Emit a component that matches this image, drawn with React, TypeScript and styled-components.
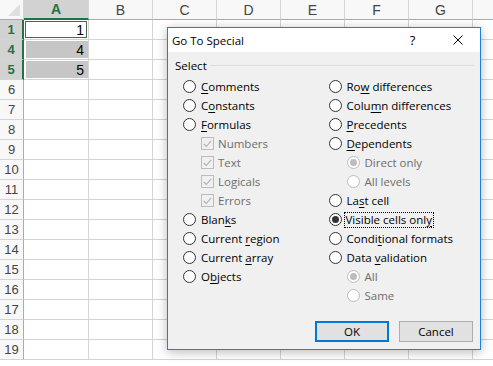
import styled, { createGlobalStyle } from "styled-components";

const GlobalStyle = createGlobalStyle`
  html, body {
    margin: 0;
    padding: 0;
    background: #fff;
    overflow: hidden;
  }
`;

const GREEN = "#217346";
const GRID = "#d4d4d4";

const Sheet = styled.div`
  position: relative;
  width: 493px;
  height: 366px;
  overflow: hidden;
  background: #fff;
  font-family: "Liberation Sans", Arial, sans-serif;
`;

const HeaderRow = styled.div`
  display: flex;
  height: 20px;
  background: #f8f8f8;
`;

const Corner = styled.div`
  position: relative;
  flex: 0 0 24px;
  box-sizing: border-box;
  border-right: 1px solid ${GRID};
  border-bottom: 1px solid #ababab;
  &::after {
    content: "";
    position: absolute;
    right: 3px;
    bottom: 3px;
    border-left: 12px solid transparent;
    border-bottom: 12px solid #dfdfdf;
  }
`;

const ColHead = styled.div<{ $on?: boolean; $w: number }>`
  flex: 0 0 ${p => p.$w}px;
  box-sizing: border-box;
  display: flex;
  align-items: center;
  justify-content: center;
  font-size: 14px;
  color: ${p => (p.$on ? GREEN : "#444")};
  font-weight: ${p => (p.$on ? "bold" : "normal")};
  background: ${p => (p.$on ? "#d2d2d2" : "transparent")};
  border-right: 1px solid ${GRID};
  border-bottom: ${p => (p.$on ? `2px solid ${GREEN}` : "1px solid #ababab")};
`;

const Row = styled.div`
  display: flex;
  height: 20px;
`;

const RowHead = styled.div<{ $on?: boolean }>`
  flex: 0 0 24px;
  box-sizing: border-box;
  display: flex;
  align-items: center;
  justify-content: center;
  font-size: 13px;
  color: ${p => (p.$on ? GREEN : "#444")};
  font-weight: ${p => (p.$on ? "bold" : "normal")};
  background: ${p => (p.$on ? "#d2d2d2" : "#f8f8f8")};
  border-bottom: 1px solid ${GRID};
  border-right: ${p => (p.$on ? `2px solid ${GREEN}` : "1px solid #ababab")};
`;

const Cell = styled.div<{ $w: number; $fill?: boolean; $active?: boolean }>`
  flex: 0 0 ${p => p.$w}px;
  box-sizing: border-box;
  display: flex;
  align-items: center;
  justify-content: flex-end;
  padding-right: 4px;
  font-size: 14px;
  color: #000;
  border-right: 1px solid ${GRID};
  border-bottom: 1px solid ${GRID};
  background: ${p => (p.$fill ? "#c6c6c6" : "#fff")};
  box-shadow: ${p =>
    p.$active
      ? "inset 0 0 0 1px #fff, inset 0 0 0 2px #4a6656"
      : p.$fill
      ? "inset 1px 0 0 1px #fff"
      : "none"};
`;

const Dialog = styled.div`
  position: absolute;
  left: 167px;
  top: 27px;
  width: 314px;
  height: 323px;
  box-sizing: border-box;
  border: 1px solid #1883d7;
  background: #f0f0f0;
  box-shadow: 0 2px 10px rgba(0, 0, 0, 0.28);
  font-family: "Segoe UI", "Open Sans", sans-serif;
  font-size: 11.5px;
  color: #000;
  display: flex;
  flex-direction: column;
`;

const TitleBar = styled.div`
  height: 24px;
  background: #fff;
  display: flex;
  align-items: center;
  padding-left: 4px;
`;

const Title = styled.div`
  flex: 1;
  font-size: 11.5px;
`;

const TitleButton = styled.div`
  width: 45px;
  height: 24px;
  display: flex;
  align-items: center;
  justify-content: center;
  font-size: 13px;
`;

const Body = styled.div`
  flex: 1;
  display: flex;
  flex-direction: column;
  padding: 5px 6px 0 7px;
`;

const GroupHeader = styled.div`
  display: flex;
  align-items: center;
  height: 16px;
  gap: 3px;
`;

const Rule = styled.div`
  flex: 1;
  height: 1px;
  background: #dcdcdc;
`;

const Columns = styled.div`
  display: flex;
  padding-left: 8px;
  margin-top: 4px;
`;

const Column = styled.div`
  width: 150px;
  display: flex;
  flex-direction: column;
`;

const Item = styled.div<{ $indent?: boolean; $disabled?: boolean }>`
  height: 19px;
  display: flex;
  align-items: center;
  padding-left: ${p => (p.$indent ? 18 : 0)}px;
  color: ${p => (p.$disabled ? "#6d6d6d" : "#000")};
  white-space: pre;
  u {
    text-decoration: underline;
    text-underline-offset: 2px;
  }
`;

const Radio = styled.span<{ $checked?: boolean; $disabled?: boolean }>`
  width: 13px;
  height: 13px;
  box-sizing: border-box;
  border-radius: 50%;
  border: 1px solid ${p => (p.$disabled ? "#bcbcbc" : "#333")};
  background: #fff;
  margin-right: 5px;
  display: flex;
  align-items: center;
  justify-content: center;
  flex: 0 0 auto;
  &::after {
    content: "";
    width: 7px;
    height: 7px;
    border-radius: 50%;
    background: ${p => (p.$disabled ? "#bcbcbc" : "#333")};
    display: ${p => (p.$checked ? "block" : "none")};
  }
`;

const Check = styled.span`
  width: 13px;
  height: 13px;
  box-sizing: border-box;
  border: 1px solid #bcbcbc;
  margin-right: 4px;
  display: flex;
  align-items: center;
  justify-content: center;
  flex: 0 0 auto;
`;

const Label = styled.span<{ $focus?: boolean }>`
  outline: ${p => (p.$focus ? "1px dotted #000" : "none")};
  padding: ${p => (p.$focus ? "0 1px" : "0")};
  margin-left: ${p => (p.$focus ? "-2px" : "0")};
  line-height: 14px;
`;

const Buttons = styled.div`
  display: flex;
  justify-content: flex-end;
  gap: 10px;
  margin-top: 16px;
  padding-right: 1px;
`;

const Button = styled.div<{ $default?: boolean }>`
  width: 74px;
  height: 21px;
  box-sizing: border-box;
  background: #e1e1e1;
  border: ${p => (p.$default ? "2px solid #0078d7" : "1px solid #adadad")};
  display: flex;
  align-items: center;
  justify-content: center;
`;

const cols = [
  { name: "A", w: 65 },
  { name: "B", w: 64 },
  { name: "C", w: 64 },
  { name: "D", w: 64 },
  { name: "E", w: 64 },
  { name: "F", w: 64 },
  { name: "G", w: 64 },
  { name: "", w: 64 },
];

const rows = [1, 4, 5, 6, 7, 8, 9, 10, 11, 12, 13, 14, 15, 16, 17, 18, 19];
const values: Record<number, string> = { 1: "1", 4: "4", 5: "5" };

function CheckMark() {
  return (
    <svg width="9" height="8" viewBox="0 0 9 8">
      <polyline points="0.8,4 3.3,6.5 8.2,0.8" fill="none" stroke="#b0b0b0" strokeWidth="1.1" />
    </svg>
  );
}

function CloseIcon() {
  return (
    <svg width="10" height="10" viewBox="0 0 10 10">
      <path d="M0.5 0.5 L9.5 9.5 M9.5 0.5 L0.5 9.5" stroke="#000" strokeWidth="1" />
    </svg>
  );
}

type OptProps = {
  children: React.ReactNode;
  checked?: boolean;
  disabled?: boolean;
  indent?: boolean;
  focus?: boolean;
};

function Opt({ children, checked, disabled, indent, focus }: OptProps) {
  return (
    <Item $indent={indent} $disabled={disabled}>
      <Radio $checked={checked} $disabled={disabled} />
      <Label $focus={focus}>{children}</Label>
    </Item>
  );
}

function Box({ children }: { children: React.ReactNode }) {
  return (
    <Item $indent $disabled>
      <Check>
        <CheckMark />
      </Check>
      <Label>{children}</Label>
    </Item>
  );
}

export default function App() {
  return (
    <Sheet>
      <GlobalStyle />
      <HeaderRow>
        <Corner />
        {cols.map((c, i) => (
          <ColHead key={i} $w={c.w} $on={c.name === "A"}>
            {c.name}
          </ColHead>
        ))}
      </HeaderRow>
      {rows.map(r => (
        <Row key={r}>
          <RowHead $on={r <= 5}>{r}</RowHead>
          {cols.map((c, i) => (
            <Cell
              key={i}
              $w={c.w}
              $active={c.name === "A" && r === 1}
              $fill={c.name === "A" && (r === 4 || r === 5)}
            >
              {c.name === "A" ? values[r] : null}
            </Cell>
          ))}
        </Row>
      ))}

      <Dialog>
        <TitleBar>
          <Title>Go To Special</Title>
          <TitleButton>?</TitleButton>
          <TitleButton>
            <CloseIcon />
          </TitleButton>
        </TitleBar>
        <Body>
          <GroupHeader>
            <span>Select</span>
            <Rule />
          </GroupHeader>
          <Columns>
            <Column>
              <Opt><u>C</u>omments</Opt>
              <Opt>C<u>o</u>nstants</Opt>
              <Opt><u>F</u>ormulas</Opt>
              <Box>Numbers</Box>
              <Box>Text</Box>
              <Box>Logicals</Box>
              <Box>Errors</Box>
              <Opt>Blan<u>k</u>s</Opt>
              <Opt>Current <u>r</u>egion</Opt>
              <Opt>Current <u>a</u>rray</Opt>
              <Opt>O<u>b</u>jects</Opt>
            </Column>
            <Column>
              <Opt>Ro<u>w</u> differences</Opt>
              <Opt>Colu<u>m</u>n differences</Opt>
              <Opt><u>P</u>recedents</Opt>
              <Opt><u>D</u>ependents</Opt>
              <Opt indent disabled checked>Direct only</Opt>
              <Opt indent disabled>All levels</Opt>
              <Opt>La<u>s</u>t cell</Opt>
              <Opt checked focus>Visible cells onl<u>y</u></Opt>
              <Opt>Condi<u>t</u>ional formats</Opt>
              <Opt>Data <u>v</u>alidation</Opt>
              <Opt indent disabled checked>All</Opt>
              <Opt indent disabled>Same</Opt>
            </Column>
          </Columns>
          <Buttons>
            <Button $default>OK</Button>
            <Button>Cancel</Button>
          </Buttons>
        </Body>
      </Dialog>
    </Sheet>
  );
}
